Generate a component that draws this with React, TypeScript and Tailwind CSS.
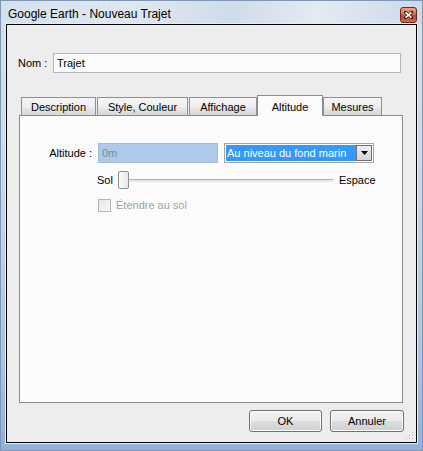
import React from "react";

const font = "font-['Liberation_Sans',Arial,sans-serif]";

function Tab({ label, w, active }: { label: string; w: number; active?: boolean }) {
  if (active) {
    return (
      <div
        className="relative z-10 h-[21px] border border-b-0 border-[#898c95] bg-[#fbfbfb] flex items-start justify-center pt-[3px] text-[11px] text-black"
        style={{ width: w }}
      >
        {label}
      </div>
    );
  }
  return (
    <div
      className="mt-[2px] h-[18px] pt-[1px] border border-b-0 border-[#8d9097] bg-[linear-gradient(to_bottom,#f4f4f4_0%,#efefef_50%,#e3e3e3_70%,#d6d6d6_100%)] flex items-center justify-center text-[11px] text-black"
      style={{ width: w }}
    >
      {label}
    </div>
  );
}

function Button({ label, w }: { label: string; w: number }) {
  return (
    <div
      className="h-[22px] rounded-[3px] border border-[#707070] bg-[linear-gradient(to_bottom,#f2f2f2_0%,#ebebeb_50%,#dddddd_51%,#cfcfcf_100%)] shadow-[inset_0_0_0_1px_#fcfcfc] flex items-center justify-center text-[11px] text-black"
      style={{ width: w }}
    >
      {label}
    </div>
  );
}

export default function App() {
  return (
    <div
      className={`${font} w-[423px] h-[451px] overflow-hidden flex flex-col border border-[#8097b3] bg-[linear-gradient(to_bottom,#d6e2ee_0%,#c8d8e9_40%,#a9c3e2_80%,#8fb1dc_100%)]`}
    >
      {/* Title bar */}
      <div className="h-[23px] flex items-center pl-[7px] pr-[5px] bg-[linear-gradient(100deg,#d4e0ec_0%,#dfe8f1_30%,#cfdce9_55%,#e3ebf3_75%,#cbd9e8_100%)]">
        <span className="text-[12px] text-black mt-[3px]">Google Earth - Nouveau Trajet</span>
        <div className="ml-auto mt-[5px] w-[17px] h-[16px] rounded-[3px] border border-[#6b2a1e] bg-[linear-gradient(to_bottom,#e9a58c_0%,#d66a4c_45%,#c2452a_55%,#d46a4a_100%)] flex items-center justify-center">
          <svg width="9" height="8" viewBox="0 0 9 8">
            <path d="M1 1 L8 7 M8 1 L1 7" stroke="#3a1a14" strokeWidth="3" strokeLinecap="square" />
            <path d="M1.5 1.3 L7.5 6.7 M7.5 1.3 L1.5 6.7" stroke="#ffffff" strokeWidth="1.6" />
          </svg>
        </div>
      </div>

      {/* Frame around client */}
      <div className="flex-1 flex flex-col px-[5px] pb-[7px]">
        <div className="flex-1 flex flex-col border border-black bg-[#ecedec] shadow-[0_0_0_1px_#e4edf6]">
          {/* Nom row */}
          <div className="mt-[28px] flex items-center pl-[11px]">
            <span className="w-[35px] text-[11px] text-black">Nom :</span>
            <div className="w-[348px] h-[20px] border border-[#b4b7bd] bg-[#fbfbfb] flex items-center pl-[3px] text-[11px] text-black">
              Trajet
            </div>
          </div>

          {/* Tabs */}
          <div className="mt-[22px] ml-[14px] flex items-start h-[20px]">
            <Tab label="Description" w={75} />
            <div className="w-[1px]" />
            <Tab label="Style, Couleur" w={91} />
            <div className="w-[1px]" />
            <Tab label="Affichage" w={68} />
            <Tab label="Altitude" w={66} active />
            <Tab label="Mesures" w={59} />
          </div>

          {/* Panel */}
          <div className="ml-[12px] w-[384px] h-[288px] border border-[#898c95] bg-[#fbfbfb] flex flex-col">
            {/* Altitude row */}
            <div className="mt-[27px] flex items-center">
              <span className="w-[72px] text-right text-[11px] text-black">Altitude :</span>
              <div className="ml-[6px] w-[120px] h-[20px] border border-[#a4bcd8] bg-[#aecaea] flex items-center pl-[3px] text-[11px] text-[#7b8896]">
                0m
              </div>
              <div className="ml-[6px] w-[150px] h-[20px] border border-[#a5a5a5] bg-white p-[1px] flex">
                <div className="flex-1 bg-[#3399ff] text-white text-[11px] flex items-center pl-[1px]">
                  Au niveau du fond marin
                </div>
                <div className="w-[16px] border border-[#6f6f6f] bg-[linear-gradient(to_bottom,#eeeeee,#d5d5d5)] flex items-center justify-center">
                  <svg width="7" height="4" viewBox="0 0 7 4">
                    <path d="M0 0 L7 0 L3.5 4 Z" fill="#000" />
                  </svg>
                </div>
              </div>
            </div>

            {/* Slider row */}
            <div className="mt-[8px] h-[18px] flex items-center">
              <span className="ml-[77px] text-[11px] text-black">Sol</span>
              <div className="ml-[5px] w-[11px] h-[18px] rounded-[2px] border border-[#8f8f8f] bg-[linear-gradient(to_right,#fafafa,#e8e8e8)]" />
              <div className="w-[204px] h-[3px] border-t border-[#b0b0b0] bg-[#e8e8e8]" />
              <span className="ml-[6px] text-[11px] text-black">Espace</span>
            </div>

            {/* Checkbox row */}
            <div className="mt-[8px] flex items-center">
              <div className="ml-[78px] w-[13px] h-[13px] border border-[#b5b5b5] bg-[linear-gradient(135deg,#e6e6e6,#fafafa)]" />
              <span className="ml-[5px] text-[11px] text-[#a3a3a3]">Étendre au sol</span>
            </div>
          </div>

          {/* Buttons */}
          <div className="mt-[7px] flex justify-end pr-[12px] gap-[8px]">
            <Button label="OK" w={73} />
            <Button label="Annuler" w={74} />
          </div>

          {/* Grip */}
          <div className="flex-1 flex items-end justify-end pr-[2px] pb-[2px]">
            <svg width="8" height="8" viewBox="0 0 8 8">
              <rect x="6" y="0" width="1" height="1" fill="#b0b0b0" />
              <rect x="3" y="3" width="1" height="1" fill="#b0b0b0" />
              <rect x="6" y="3" width="1" height="1" fill="#b0b0b0" />
              <rect x="0" y="6" width="1" height="1" fill="#b0b0b0" />
              <rect x="3" y="6" width="1" height="1" fill="#b0b0b0" />
              <rect x="6" y="6" width="1" height="1" fill="#b0b0b0" />
            </svg>
          </div>
        </div>
      </div>
    </div>
  );
}
